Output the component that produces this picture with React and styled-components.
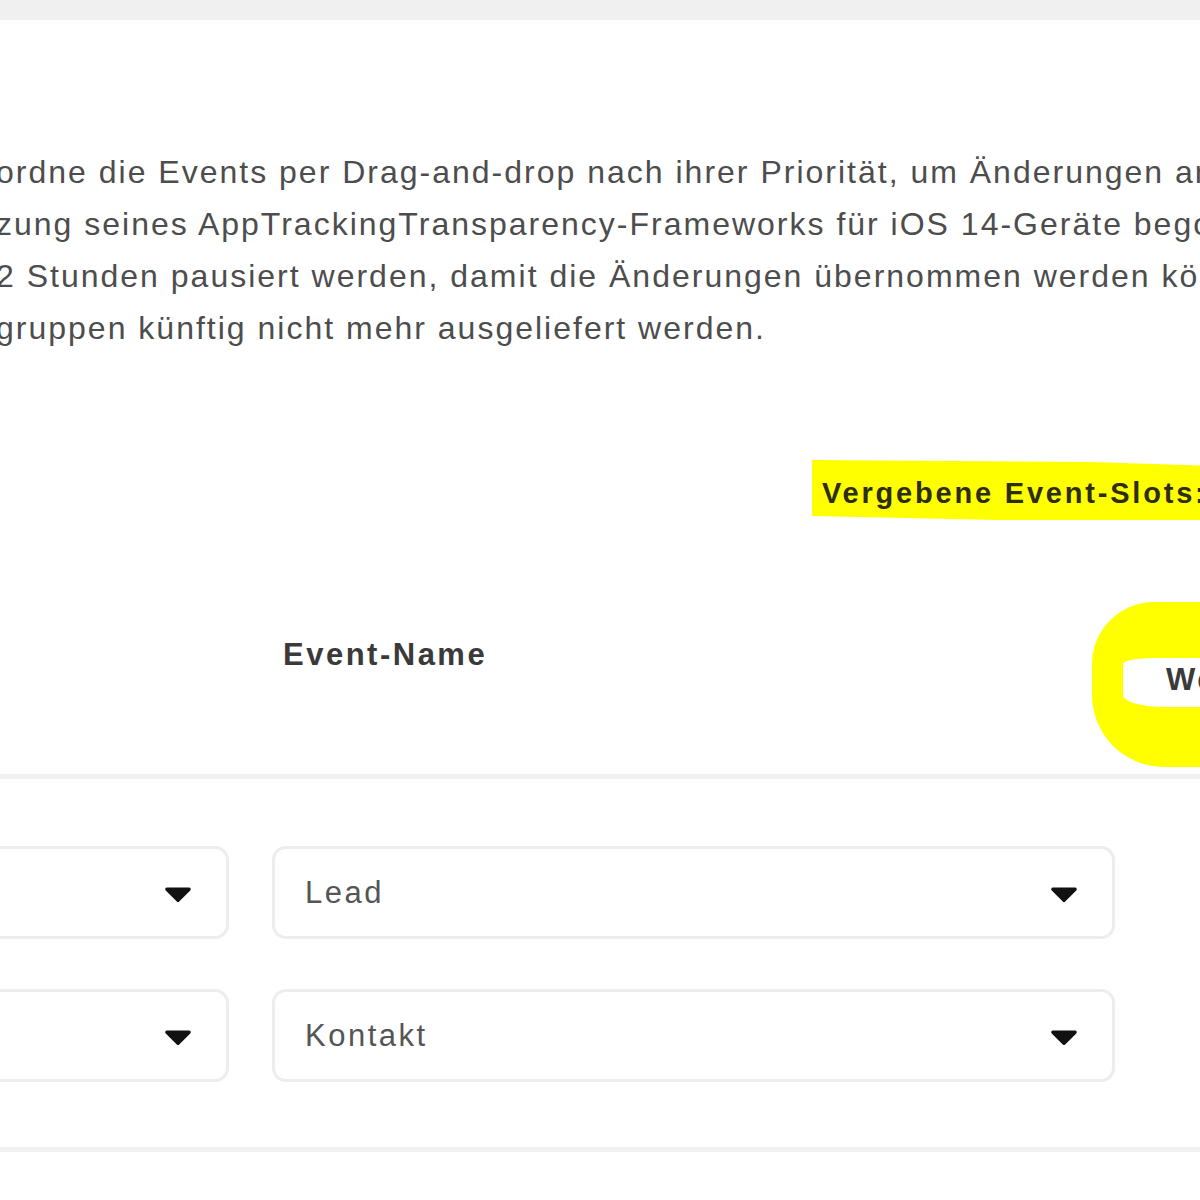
import React from 'react'
import styled, { createGlobalStyle } from 'styled-components'
import { FaCaretDown } from 'react-icons/fa'

const rows = [
  { id: 1, slot: '', name: 'Lead' },
  { id: 2, slot: '', name: 'Kontakt' },
]

const introLines = [
  'ordne die Events per Drag-and-drop nach ihrer Priorität, um Änderungen an ihnen',
  'zung seines AppTrackingTransparency-Frameworks für iOS 14-Geräte begonnen hat',
  '2 Stunden pausiert werden, damit die Änderungen übernommen werden können.',
  'gruppen künftig nicht mehr ausgeliefert werden.',
]

const App = () => {
  return (
    <Page>
      <GlobalStyle />
      <TopBar />
      <Card>
        <Intro>
          {introLines.map((line) => (
            <span key={line}>{line}</span>
          ))}
        </Intro>
        <SlotsRow>
          <Marker>Vergebene Event-Slots: 2/8</Marker>
        </SlotsRow>
        <HeaderRow>
          <div />
          <HeadCell>Event-Name</HeadCell>
          <HeadCell $annotated>
            <Ring />
            Wert
          </HeadCell>
        </HeaderRow>
        <Divider />
        <Body>
          {rows.map((row) => (
            <Row key={row.id}>
              <Select>
                <span>{row.slot}</span>
                <FaCaretDown size={44} />
              </Select>
              <Select>
                <span>{row.name}</span>
                <FaCaretDown size={44} />
              </Select>
            </Row>
          ))}
        </Body>
        <Divider />
      </Card>
    </Page>
  )
}

const GlobalStyle = createGlobalStyle`
  html, body {
    margin: 0;
    padding: 0;
    background: #fff;
    overflow: hidden;
  }
  body {
    font-family: 'Liberation Sans', Arial, sans-serif;
  }
`

const Page = styled.div`
  width: 1200px;
  height: 1200px;
  overflow: hidden;
  background: #fff;
`

const TopBar = styled.div`
  height: 20px;
  background: #f0f0f0;
  box-shadow: 0 2px 4px rgba(0, 0, 0, 0.02);
`

const Card = styled.div`
  width: 1600px;
  margin-left: -71px;
  padding-top: 126px;
  font-size: 31px;
  letter-spacing: 2.5px;
`

const Intro = styled.p`
  margin: 0 0 0 67px;
  display: flex;
  flex-direction: column;
  font-size: 32px;
  letter-spacing: 2px;
  line-height: 52px;
  color: #4d4d4d;
  white-space: nowrap;
`

const SlotsRow = styled.div`
  display: flex;
  margin: 106px 0 0 883px;
`

const Marker = styled.span`
  display: block;
  padding: 18px 10px 12px;
  line-height: 30px;
  font-size: 29px;
  letter-spacing: 2.8px;
  font-weight: 700;
  color: #2d2d10;
  background: #ffff00;
  white-space: nowrap;
  clip-path: polygon(0 0, 60% 2px, 100% 8px, 100% 100%, 40% 100%, 0 calc(100% - 4px));
`

const grid = `
  display: grid;
  grid-template-columns: 300px 843px 1fr;
  column-gap: 43px;
`

const HeaderRow = styled.div`
  ${grid}
  padding: 82px 0 7px;
`

const HeadCell = styled.div`
  position: relative;
  height: 165px;
  box-sizing: border-box;
  padding: ${(p) => (p.$annotated ? '60px 0 0 8px' : '35px 0 0 11px')};
  line-height: 36px;
  font-weight: 700;
  color: #3a3a3a;
  white-space: nowrap;
`

const Ring = styled.span`
  position: absolute;
  left: -66px;
  top: 0;
  width: 420px;
  height: 165px;
  box-sizing: border-box;
  border: solid #ffff00;
  border-width: 56px 0 60px 31px;
  border-radius: 62px 0 0 72px;
  pointer-events: none;
`

const Divider = styled.div`
  height: 5px;
  background: #f0f0f0;
`

const Body = styled.div`
  display: flex;
  flex-direction: column;
  gap: 50px;
  padding: 67px 0 65px;
`

const Row = styled.div`
  ${grid}
`

const Select = styled.div`
  height: 93px;
  box-sizing: border-box;
  display: flex;
  align-items: center;
  justify-content: space-between;
  padding: 0 26px 0 30px;
  border: 3px solid #ededed;
  border-radius: 14px;
  color: #555;
  svg {
    color: #111;
  }
`

export default App
